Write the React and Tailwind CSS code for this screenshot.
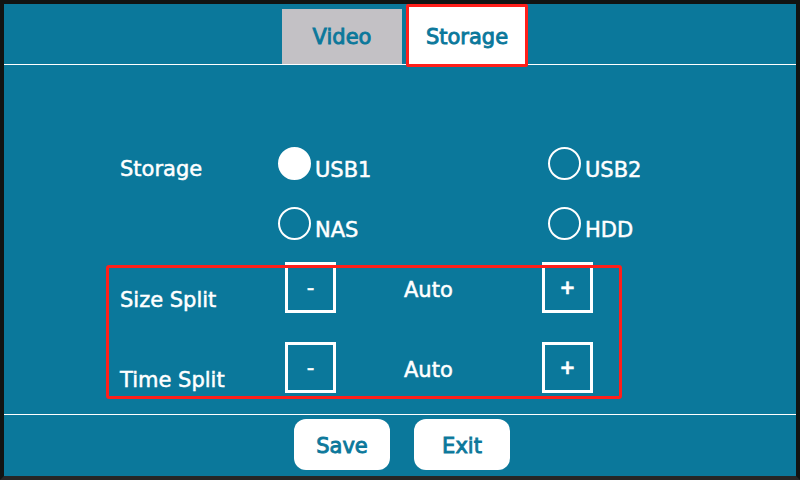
import React from "react";

function Radio({ label, checked, width }) {
  return (
    <div className={`flex h-[34px] items-end ${width}`}>
      <div
        className={`self-start h-[33px] w-[33px] rounded-full border-2 border-white ${checked ? "bg-white" : ""}`}
      />
      <span className="relative top-[1px] ml-[4px] leading-[24px] text-white">{label}</span>
    </div>
  );
}

function SplitRow({ label, mt }) {
  return (
    <div className={`flex h-[51px] ${mt}`}>
      <div className="flex w-[165px] items-end pb-[3px]">
        <span className="relative top-[2px] leading-[24px] text-white">{label}</span>
      </div>
      <div className="flex h-[51px] w-[51px] items-center justify-center border-[3px] border-white text-white leading-[24px]">
        <span className="relative top-[0px]">-</span>
      </div>
      <div className="flex w-[206px] items-center pl-[68px]">
        <span className="relative top-[2px] leading-[24px] text-white">Auto</span>
      </div>
      <div className="flex h-[51px] w-[51px] items-center justify-center border-[3px] border-white text-white leading-[24px]">
        <span className="relative top-[-1px] font-bold text-[19px]">+</span>
      </div>
    </div>
  );
}

export default function App() {
  return (
    <div className="h-[480px] w-[800px] border-[4px] border-[#111413] border-b-[#262626] font-['DejaVu_Sans',sans-serif] text-[21px] [-webkit-text-stroke:0.5px_currentColor]">
      <div className="flex h-full flex-col bg-[#0b789b]">
        {/* Header tabs */}
        <div className="flex h-[61px] shrink-0 items-start border-b border-white pl-[278px]">
          <div className="mt-[5px] flex h-[55px] w-[120px] items-center justify-center bg-[#c3c1c5] text-[#0b789b]">
            <span className="relative top-[1px] [-webkit-text-stroke:0.9px_currentColor]">Video</span>
          </div>
          <div className="relative z-10 ml-[4px] flex h-[63px] w-[122px] items-center justify-center rounded-[2px] border-[3px] border-[#ff1f1a] bg-white text-[#0b789b]">
            <span className="relative top-[2px] [-webkit-text-stroke:0.9px_currentColor]">Storage</span>
          </div>
        </div>

        {/* Body */}
        <div className="relative flex-1 pl-[116px] pt-[82px]">
          <div className="flex h-[34px]">
            <div className="flex w-[158px] items-end">
              <span className="relative top-[1px] mb-[1px] leading-[24px] text-white">Storage</span>
            </div>
            <Radio label="USB1" checked width="w-[270px]" />
            <Radio label="USB2" width="w-[120px]" />
          </div>
          <div className="mt-[26px] flex h-[34px] pl-[158px]">
            <Radio label="NAS" width="w-[270px]" />
            <Radio label="HDD" width="w-[120px]" />
          </div>

          <SplitRow label="Size Split" mt="mt-[21px]" />
          <SplitRow label="Time Split" mt="mt-[29px]" />

          <div className="pointer-events-none absolute left-[102px] top-[200px] h-[134px] w-[516px] rounded-[3px] border-[3px] border-[#ff1f1a]" />
        </div>

        {/* Footer */}
        <div className="flex h-[62px] shrink-0 gap-[24px] border-t border-white pl-[290px] pt-[4px]">
          <div className="flex h-[51px] w-[96px] items-center justify-center rounded-[12px] bg-white text-[#0b789b]">
            <span className="relative top-[2px] [-webkit-text-stroke:0.9px_currentColor]">Save</span>
          </div>
          <div className="flex h-[51px] w-[96px] items-center justify-center rounded-[12px] bg-white text-[#0b789b]">
            <span className="relative top-[2px] [-webkit-text-stroke:0.9px_currentColor]">Exit</span>
          </div>
        </div>
      </div>
    </div>
  );
}
